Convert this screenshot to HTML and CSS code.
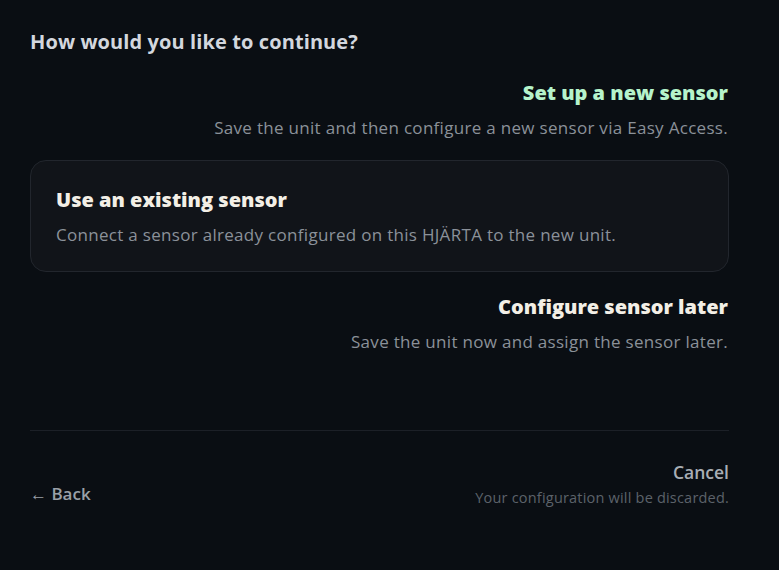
FILE: index.html
```html
<!DOCTYPE html>
<html lang="en">
<head>
<meta charset="utf-8">
<title>How would you like to continue?</title>
<link rel="stylesheet" href="styles.css">
</head>
<body>
<main class="page">
  <h1 class="heading">How would you like to continue?</h1>
  <div class="options">
    <div class="option option-new">
      <div class="option-title">Set up a new sensor</div>
      <div class="option-desc">Save the unit and then configure a new sensor via Easy Access.</div>
    </div>
    <div class="option option-selected">
      <div class="option-title">Use an existing sensor</div>
      <div class="option-desc">Connect a sensor already configured on this HJÄRTA to the new unit.</div>
    </div>
    <div class="option">
      <div class="option-title">Configure sensor later</div>
      <div class="option-desc">Save the unit now and assign the sensor later.</div>
    </div>
  </div>
  <hr class="divider">
  <div class="footer">
    <div class="back">← Back</div>
    <div class="cancel-block">
      <div class="cancel">Cancel</div>
      <div class="cancel-note">Your configuration will be discarded.</div>
    </div>
  </div>
</main>
</body>
</html>
```

FILE: styles.css
```css
html, body {
  margin: 0;
  padding: 0;
  background: #0a0e13;
  height: 100%;
}
body {
  font-family: "Open Sans", "Noto Sans", sans-serif;
  color: #d0d4dc;
}
.page {
  width: 699px;
  margin-left: 30px;
  padding-top: 28px;
}
.heading {
  margin: 0 0 2px 0;
  font-size: 20px;
  line-height: 28px;
  font-weight: 700;
  letter-spacing: 0.1px;
  color: #d3d7de;
}
.options {
  display: flex;
  flex-direction: column;
}
.option {
  padding: 19px 0 18px 0;
  border: 1px solid transparent;
  text-align: right;
}
.option-title {
  font-size: 20px;
  line-height: 30px;
  font-weight: 800;
  color: #f3efe6;
}
.option-desc {
  margin-top: 7px;
  font-size: 17px;
  line-height: 26px;
  letter-spacing: 0.3px;
  color: #8b9199;
}
.option-new .option-title {
  color: #b6f3cb;
}
.option-selected {
  text-align: left;
  padding: 24px 25px 23px 25px;
  border-color: #22262d;
  border-radius: 16px;
  background: #111419;
}
.divider {
  margin: 56px 0 0 0;
  border: 0;
  height: 1px;
  background: #1c2027;
}
.footer {
  display: flex;
  justify-content: space-between;
  align-items: flex-end;
  padding-top: 29px;
}
.back {
  font-size: 17px;
  line-height: 24px;
  font-weight: 600;
  color: #9aa0a8;
  margin-bottom: 2px;
}
.cancel-block {
  text-align: right;
}
.cancel {
  font-size: 17.5px;
  line-height: 24px;
  font-weight: 600;
  color: #a9aeb5;
}
.cancel-note {
  margin-top: 4px;
  font-size: 14.5px;
  line-height: 20px;
  letter-spacing: 0.2px;
  color: #5c626a;
}
```
